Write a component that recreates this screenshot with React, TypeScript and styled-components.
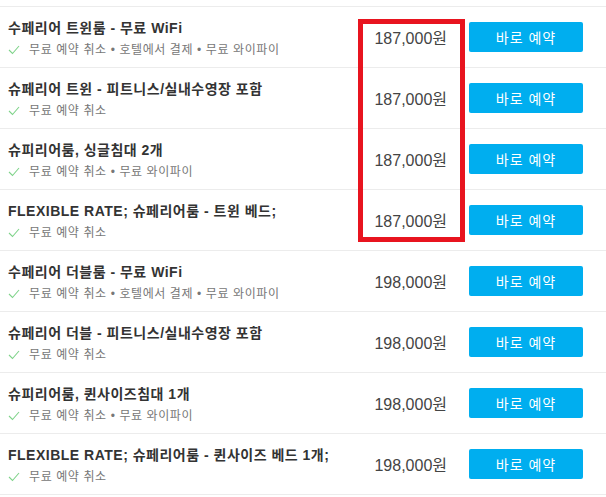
import React from "react";
import styled, { createGlobalStyle } from "styled-components";

const GlobalStyle = createGlobalStyle`
  html, body {
    margin: 0;
    padding: 0;
    background: #fff;
    font-family: "Liberation Sans", "Noto Sans CJK KR", sans-serif;
  }
`;

interface Room {
  name: string;
  perks: string[];
  price: string;
}

const rooms: Room[] = [
  { name: "수페리어 트윈룸 - 무료 WiFi", perks: ["무료 예약 취소", "호텔에서 결제", "무료 와이파이"], price: "187,000원" },
  { name: "슈페리어 트윈 - 피트니스/실내수영장 포함", perks: ["무료 예약 취소"], price: "187,000원" },
  { name: "슈피리어룸, 싱글침대 2개", perks: ["무료 예약 취소", "무료 와이파이"], price: "187,000원" },
  { name: "FLEXIBLE RATE; 슈페리어룸 - 트윈 베드;", perks: ["무료 예약 취소"], price: "187,000원" },
  { name: "수페리어 더블룸 - 무료 WiFi", perks: ["무료 예약 취소", "호텔에서 결제", "무료 와이파이"], price: "198,000원" },
  { name: "슈페리어 더블 - 피트니스/실내수영장 포함", perks: ["무료 예약 취소"], price: "198,000원" },
  { name: "슈피리어룸, 퀸사이즈침대 1개", perks: ["무료 예약 취소", "무료 와이파이"], price: "198,000원" },
  { name: "FLEXIBLE RATE; 슈페리어룸 - 퀸사이즈 베드 1개;", perks: ["무료 예약 취소"], price: "198,000원" },
];

const Page = styled.div`
  position: relative;
  padding-top: 6px;
`;

const List = styled.ul`
  list-style: none;
  margin: 0;
  padding: 0;
  border-bottom: 1px solid #ececec;
`;

const Row = styled.li`
  display: flex;
  align-items: center;
  height: 60px;
  padding: 0 23px 0 8px;
  border-top: 1px solid #ececec;
`;

const Info = styled.div`
  flex: 1;
  display: flex;
  flex-direction: column;
  gap: 3px;
  padding-top: 3px;
`;

const Name = styled.div`
  font-size: 14px;
  font-weight: bold;
  line-height: 20px;
  letter-spacing: 0.5px;
  color: #333;
  white-space: nowrap;
`;

const Perks = styled.div`
  display: flex;
  align-items: center;
  font-size: 12px;
  line-height: 18px;
  letter-spacing: 0.6px;
  color: #777;
`;

const Check = styled.svg`
  width: 12px;
  height: 10px;
  margin: 0 9px 0 0;
  flex: none;
`;

const Price = styled.div`
  width: 90px;
  margin-right: 22px;
  text-align: right;
  font-size: 16px;
  color: #444;
`;

const BookButton = styled.button`
  width: 114px;
  height: 30px;
  border: none;
  border-radius: 2px;
  background: #00aeef;
  color: #fff;
  font-family: "Liberation Sans", "Noto Sans CJK KR", sans-serif;
  font-size: 14px;
  letter-spacing: 1px;
  padding: 0;
  cursor: pointer;
`;

const Highlight = styled.div`
  position: absolute;
  left: 358px;
  top: 19px;
  width: 107px;
  height: 223px;
  box-sizing: border-box;
  border: 5px solid #e8141f;
  pointer-events: none;
`;

export default function App() {
  return (
    <>
      <GlobalStyle />
      <Page>
        <List>
          {rooms.map((room) => (
            <Row key={room.name}>
              <Info>
                <Name>{room.name}</Name>
                <Perks>
                  <Check viewBox="0 0 12 10">
                    <polyline points="1,5 4.5,8.5 11,1" fill="none" stroke="#7fd38a" strokeWidth="1.1" />
                  </Check>
                  {room.perks.join(" • ")}
                </Perks>
              </Info>
              <Price>{room.price}</Price>
              <BookButton>바로 예약</BookButton>
            </Row>
          ))}
        </List>
        <Highlight />
      </Page>
    </>
  );
}
